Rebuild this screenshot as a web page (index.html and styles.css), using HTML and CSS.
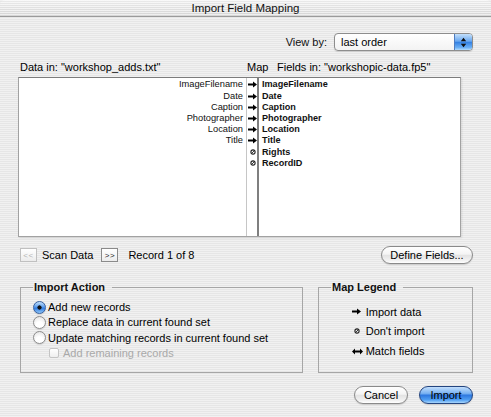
FILE: index.html
```html
<!DOCTYPE html>
<html>
<head>
<meta charset="utf-8">
<title>Import Field Mapping</title>
<link rel="stylesheet" href="styles.css">
</head>
<body>
<div class="titlebar">Import Field Mapping</div>
<div class="content">
  <div class="viewby">
    <span class="viewby-label">View by:</span>
    <div class="popup">
      <span class="popup-label">last order</span>
      <span class="popup-cap"><svg width="7" height="11" viewBox="0 0 7 11"><path d="M3.5 0.8L6.2 4.2H0.8z M3.5 10.2L6.2 6.8H0.8z" fill="#111"/></svg></span>
    </div>
  </div>

  <div class="headers">
    <span class="data-in">Data in: "workshop_adds.txt"</span>
    <span class="map">Map</span>
    <span class="fields-in">Fields in: "workshopic-data.fp5"</span>
  </div>

  <div class="listbox">
    <div class="col src">
      <div class="row">ImageFilename</div>
      <div class="row">Date</div>
      <div class="row">Caption</div>
      <div class="row">Photographer</div>
      <div class="row">Location</div>
      <div class="row">Title</div>
    </div>
    <div class="col arrows">
      <div class="row"><svg class="arrow" width="9" height="7" viewBox="0 0 9 7"><path d="M0 2.5h5V0.5L9 3.5 5 6.5V4.5H0z"/></svg></div>
      <div class="row"><svg class="arrow" width="9" height="7" viewBox="0 0 9 7"><path d="M0 2.5h5V0.5L9 3.5 5 6.5V4.5H0z"/></svg></div>
      <div class="row"><svg class="arrow" width="9" height="7" viewBox="0 0 9 7"><path d="M0 2.5h5V0.5L9 3.5 5 6.5V4.5H0z"/></svg></div>
      <div class="row"><svg class="arrow" width="9" height="7" viewBox="0 0 9 7"><path d="M0 2.5h5V0.5L9 3.5 5 6.5V4.5H0z"/></svg></div>
      <div class="row"><svg class="arrow" width="9" height="7" viewBox="0 0 9 7"><path d="M0 2.5h5V0.5L9 3.5 5 6.5V4.5H0z"/></svg></div>
      <div class="row"><svg class="arrow" width="9" height="7" viewBox="0 0 9 7"><path d="M0 2.5h5V0.5L9 3.5 5 6.5V4.5H0z"/></svg></div>
      <div class="row"><svg class="noimp" width="6" height="6" viewBox="0 0 6 6"><circle cx="3" cy="3" r="2.1" fill="none" stroke="#222" stroke-width="1.1"/><path d="M1.5 4.5L4.5 1.5" stroke="#222" stroke-width="0.9"/></svg></div>
      <div class="row"><svg class="noimp" width="6" height="6" viewBox="0 0 6 6"><circle cx="3" cy="3" r="2.1" fill="none" stroke="#222" stroke-width="1.1"/><path d="M1.5 4.5L4.5 1.5" stroke="#222" stroke-width="0.9"/></svg></div>
    </div>
    <div class="col dst">
      <div class="row">ImageFilename</div>
      <div class="row">Date</div>
      <div class="row">Caption</div>
      <div class="row">Photographer</div>
      <div class="row">Location</div>
      <div class="row">Title</div>
      <div class="row">Rights</div>
      <div class="row">RecordID</div>
    </div>
  </div>

  <div class="scanrow">
    <span class="sbtn disabled">&lt;&lt;</span>
    <span class="scan-label">Scan Data</span>
    <span class="sbtn">&gt;&gt;</span>
    <span class="record">Record 1 of 8</span>
    <button class="btn define">Define Fields...</button>
  </div>

  <div class="groups">
    <fieldset class="group action">
      <legend>Import Action</legend>
      <div class="opt"><span class="radio on"></span><span>Add new records</span></div>
      <div class="opt"><span class="radio"></span><span>Replace data in current found set</span></div>
      <div class="opt"><span class="radio"></span><span>Update matching records in current found set</span></div>
      <div class="opt sub disabled"><span class="check"></span><span>Add remaining records</span></div>
    </fieldset>
    <fieldset class="group legendbox">
      <legend>Map Legend</legend>
      <div class="items">
        <div class="item"><span class="ico"><svg width="9" height="7" viewBox="0 0 9 7"><path d="M0 2.5h5V0.5L9 3.5 5 6.5V4.5H0z"/></svg></span><span>Import data</span></div>
        <div class="item"><span class="ico"><svg class="noimp" width="6" height="6" viewBox="0 0 6 6"><circle cx="3" cy="3" r="2.1" fill="none" stroke="#222" stroke-width="1.1"/><path d="M1.5 4.5L4.5 1.5" stroke="#222" stroke-width="0.9"/></svg></span><span>Don't import</span></div>
        <div class="item"><span class="ico"><svg width="11" height="7" viewBox="0 0 11 7"><path d="M0 3.5L3 0.5V2.5H8V0.5L11 3.5 8 6.5V4.5H3V6.5z"/></svg></span><span>Match fields</span></div>
      </div>
    </fieldset>
  </div>

  <div class="footer">
    <button class="btn">Cancel</button>
    <button class="btn default">Import</button>
  </div>
</div>
</body>
</html>
```
FILE: styles.css
```css
* { box-sizing: border-box; }
html, body { margin: 0; padding: 0; }
body {
  width: 491px;
  height: 417px;
  overflow: hidden;
  font-family: "Liberation Sans", Arial, sans-serif;
  font-size: 11px;
  color: #000;
  background: repeating-linear-gradient(to bottom, #f1f1f1 0 1px, #e6e6e6 1px 2px);
}

.titlebar {
  height: 17px;
  border-bottom: 1px solid #9a9a9a;
  text-align: center;
  font-size: 11.5px;
  line-height: 16px;
  color: #111;
  border-radius: 5px 5px 0 0;
  background:
    repeating-linear-gradient(to bottom, rgba(255,255,255,0.5) 0 1px, rgba(0,0,0,0.03) 1px 2px),
    linear-gradient(#f2f2f2, #dcdcdc);
}

.content { padding: 0 18px; }

/* View by */
.viewby {
  display: flex;
  justify-content: flex-end;
  align-items: center;
  gap: 7px;
  margin-top: 16px;
  height: 18px;
}
.viewby-label { color: #111; }
.popup {
  width: 139px;
  height: 18px;
  display: flex;
  align-items: stretch;
  border: 1px solid #8d8d8d;
  border-radius: 4px;
  background: linear-gradient(#ffffff, #f3f3f3);
  box-shadow: 0 1px 1px rgba(0,0,0,0.12);
  overflow: hidden;
}
.popup-label { flex: 1; padding-left: 6px; line-height: 16px; }
.popup-cap {
  width: 18px;
  display: flex;
  align-items: center;
  justify-content: center;
  border-left: 1px solid #4f7cc0;
  background: linear-gradient(#c4e0fb, #69a7ef 45%, #3481e3 52%, #6cb0f5 85%, #b5dcfc);
}

/* Column headers */
.headers {
  display: flex;
  margin-top: 10px;
  height: 13px;
  line-height: 13px;
}
.data-in { width: 229px; padding-left: 2px; }
.map { width: 30px; }

/* List */
.listbox {
  margin-top: 3px;
  width: 443px;
  height: 160px;
  display: flex;
  background: #fff;
  border: 1px solid #a2a2a2;
  border-top-color: #7c7c7c;
  box-shadow: 1px 1px 2px rgba(0,0,0,0.10);
}
.col { padding-top: 1.4px; }
.row { height: 11.2px; line-height: 11.2px; white-space: nowrap; }
.src {
  width: 228px;
  border-right: 1px solid #c6c6c6;
  text-align: right;
  padding-right: 3px;
  font-size: 9.3px;
  color: #111;
}
.arrows {
  width: 12px;
  border-right: 2px solid #7f7f7f;
}
.arrows .row { display: flex; align-items: center; }
.arrows .arrow { margin-left: 1px; }
.arrows .noimp { margin-left: 2.5px; }
.dst {
  flex: 1;
  padding-left: 3px;
  font-weight: bold;
  font-size: 9.1px;
  color: #111;
}

/* Scan row */
.scanrow {
  margin-top: 9px;
  height: 18px;
  display: flex;
  align-items: center;
}
.sbtn {
  width: 17px;
  height: 14px;
  border: 1px solid #8a8a8a;
  background: linear-gradient(#ffffff, #ececec);
  font-size: 8px;
  color: #222;
  display: flex;
  align-items: center;
  justify-content: center;
  letter-spacing: 0.5px;
}
.sbtn.disabled { border-color: #c0c0c0; color: #b4b4b4; margin-left: 2px; }
.scan-label { margin-left: 5px; margin-right: 8px; }
.record { margin-left: 10px; }

/* Buttons */
.btn {
  font-family: "Liberation Sans", Arial, sans-serif;
  font-size: 11px;
  color: #000;
  height: 18px;
  padding: 0;
  border: 1px solid #8a8a8a;
  border-radius: 9px;
  background: linear-gradient(#ffffff, #f4f4f4 45%, #e3e3e3 52%, #f2f2f2 85%, #ffffff);
  box-shadow: 0 1px 1px rgba(0,0,0,0.15);
  display: flex;
  align-items: center;
  justify-content: center;
}
.btn.define { margin-left: auto; width: 92px; }

/* Group boxes */
.groups {
  margin-top: 16.5px;
  display: flex;
}
.group {
  margin: 0;
  height: 92.5px;
  border: 1px solid #a6a6a6;
  padding: 6px 0 0 12px;
  min-width: 0;
}
.group legend {
  font-weight: bold;
  line-height: 13px;
  padding: 0 7px 0 1px;
  margin: 0;
  color: #111;
}
.action { width: 283px; margin-left: 2px; }
.legendbox { width: 155px; margin-left: 15px; padding-top: 8.3px; }

.opt {
  height: 15.3px;
  display: flex;
  align-items: center;
  gap: 2px;
  white-space: nowrap;
}
.radio {
  width: 13px;
  height: 13px;
  border-radius: 50%;
  border: 1px solid #8d8d8d;
  background: radial-gradient(circle at 50% 75%, #ffffff 0 35%, #dedede 100%);
  box-shadow: 0 1px 1px rgba(0,0,0,0.12);
}
.radio.on {
  border-color: #37609f;
  background:
    radial-gradient(circle at 50% 50%, #111 0 1.8px, transparent 2.4px),
    linear-gradient(#c3e0fb, #5c9ded 45%, #2f7ae0 55%, #8fc6f7);
}
.opt.sub { margin-left: 16px; gap: 4px; }
.check {
  width: 10px;
  height: 10px;
  border: 1px solid #c4c4c4;
  border-radius: 2px;
  background: linear-gradient(#ffffff, #efefef);
}
.opt.disabled { color: #a9a9a9; }

.items { margin-left: 21px; }
.item {
  height: 19.7px;
  display: flex;
  align-items: center;
  white-space: nowrap;
}
.ico {
  width: 13.7px;
  display: flex;
  align-items: center;
}
.ico .noimp { margin-left: 2px; }

/* Footer */
.footer {
  margin-top: 13px;
  display: flex;
  justify-content: flex-end;
  gap: 11px;
}
.footer .btn { width: 54px; }
.btn.default {
  border-color: #23447f;
  background: linear-gradient(#c2defc, #79b2f2 40%, #2f79e0 52%, #4f9ef2 80%, #a9d6fc);
}
```
